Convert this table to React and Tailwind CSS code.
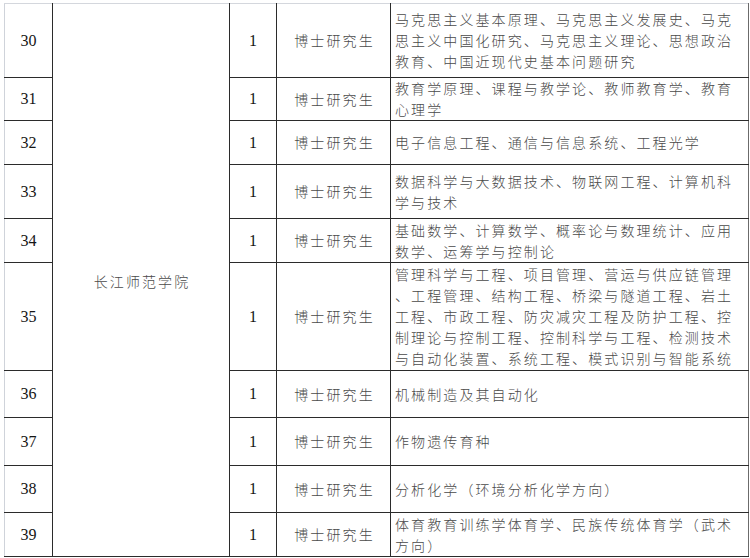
const rows = [
   {
      no: 30,
      h: "h-[74px]",
      major: [
         "马克思主义基本原理、马克思主义发展史、马克",
         "思主义中国化研究、马克思主义理论、思想政治",
         "教育、中国近现代史基本问题研究",
      ],
   },
   {
      no: 31,
      h: "h-[43px]",
      major: ["教育学原理、课程与教学论、教师教育学、教育", "心理学"],
   },
   { no: 32, h: "h-[44px]", major: ["电子信息工程、通信与信息系统、工程光学"] },
   {
      no: 33,
      h: "h-[54px]",
      major: ["数据科学与大数据技术、物联网工程、计算机科", "学与技术"],
   },
   {
      no: 34,
      h: "h-[44px]",
      major: ["基础数学、计算数学、概率论与数理统计、应用", "数学、运筹学与控制论"],
   },
   {
      no: 35,
      h: "h-[108px]",
      major: [
         "管理科学与工程、项目管理、营运与供应链管理",
         "、工程管理、结构工程、桥梁与隧道工程、岩土",
         "工程、市政工程、防灾减灾工程及防护工程、控",
         "制理论与控制工程、控制科学与工程、检测技术",
         "与自动化装置、系统工程、模式识别与智能系统",
      ],
   },
   { no: 36, h: "h-[47px]", major: ["机械制造及其自动化"] },
   { no: 37, h: "h-[48px]", major: ["作物遗传育种"] },
   { no: 38, h: "h-[47px]", major: ["分析化学（环境分析化学方向）"] },
   {
      no: 39,
      h: "h-[44px]",
      major: ["体育教育训练学体育学、民族传统体育学（武术", "方向）"],
   },
];

const cjk = "font-['Noto_Sans_CJK_SC',sans-serif] font-light text-[14px] tracking-[2.1px] text-[#4a4a4a]";
const num = "font-['Liberation_Serif','Times_New_Roman',serif] text-[16px] text-[#151515]";
const cell = "border border-[#2b2b2b] p-0";

export default function App() {
   return (
      <div className="w-[750px] h-[558px] bg-white overflow-hidden pt-[3px] pl-[4px]">
         <table className="table-fixed border-collapse w-[744px] border-l border-t border-l-[#cfd3da] border-t-[#d4d7dd]">
            <colgroup>
               <col className="w-[48px]" />
               <col className="w-[177px]" />
               <col className="w-[47px]" />
               <col className="w-[114px]" />
               <col className="w-[358px]" />
            </colgroup>
            <tbody>
               {rows.map((row, i) => {
                  // 第一行上边框是浅色的（截图裁切处）
                  const top = i === 0 ? "border-t-[#d4d7dd]" : "";
                  return (
                     <tr key={row.no} className={row.h}>
                        <td className={`${cell} ${top} border-l-[#cfd3da] text-center align-middle ${num}`}>
                           {row.no}
                        </td>

                        {/* 学院，合并单元格 */}
                        {i === 0 && (
                           <td rowSpan={rows.length} className={`${cell} ${top} text-center align-middle ${cjk}`}>
                              <span className="relative top-[1px] pl-[2px]">长江师范学院</span>
                           </td>
                        )}

                        <td className={`${cell} ${top} text-center align-middle ${num}`}>1</td>
                        <td className={`${cell} ${top} text-center align-middle ${cjk}`}>
                           <span className="pl-[2px]">博士研究生</span>
                        </td>
                        <td className={`${cell} ${top} border-r-[#6b6b6b] align-middle pl-[4px] ${cjk} leading-[21px]`}>
                           {row.major.map((line) => (
                              <div key={line} className="whitespace-nowrap">
                                 {line}
                              </div>
                           ))}
                        </td>
                     </tr>
                  );
               })}
            </tbody>
         </table>
      </div>
   );
}
